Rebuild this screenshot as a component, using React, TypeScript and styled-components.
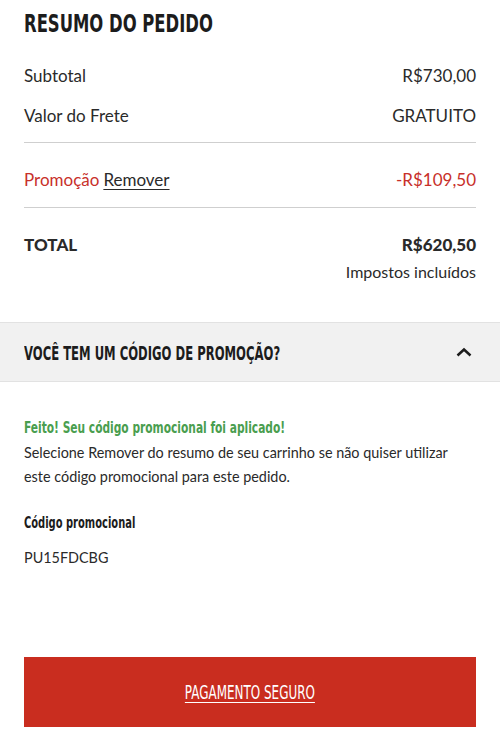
import styled, { createGlobalStyle } from 'styled-components';

const GlobalStyle = createGlobalStyle`
    body {
        margin: 0;
        background: #fff;
        font-family: Lato, "Open Sans", sans-serif;
        color: #222;
    }
`

const Page = styled.div`
    width: 500px;
    height: 734px;
    overflow: hidden;
    background: #fff;
`

const Summary = styled.section`
    padding: 0 24px;
`

// no condensed face is installed, so the narrow headline look is squeezed by hand
const Condensed = styled.span<{ $size: number; $scale: number; $weight?: number; $color?: string }>`
    display: inline-block;
    white-space: nowrap;
    font-family: "DejaVu Sans Condensed", "DejaVu Sans", sans-serif;
    font-weight: ${p => p.$weight ?? 700};
    font-size: ${p => p.$size}px;
    color: ${p => p.$color || '#1c1c1c'};
    transform: scaleX(${p => p.$scale});
    transform-origin: left center;
`

const Title = styled.h1`
    margin: 0;
    padding-top: 3px;
    line-height: 34px;
`

const Row = styled.div<{ $tone?: 'red' | 'bold' }>`
    display: flex;
    justify-content: space-between;
    align-items: center;
    font-size: 17px;
    line-height: 24px;
    color: ${p => p.$tone === 'red' ? '#c8302a' : '#2a2a2a'};
    font-weight: ${p => p.$tone === 'bold' ? 900 : 400};
`

const Group = styled.div<{ $pad: string }>`
    display: flex;
    flex-direction: column;
    gap: 16px;
    padding: ${p => p.$pad};
    border-bottom: 1px solid #cfcfcf;

    &:last-child {
        border-bottom: none;
    }
`

const RemoveLink = styled.a`
    color: #2a2a2a;
    text-decoration: underline;
    text-underline-offset: 3px;
    margin-left: 4px;
`

const TaxNote = styled.div`
    text-align: right;
    font-size: 16px;
    line-height: 24px;
    margin-top: 3px;
    color: #2a2a2a;
`

const PromoBar = styled.div`
    margin-top: 38px;
    height: 58px;
    display: flex;
    align-items: center;
    justify-content: space-between;
    padding: 0 28px 0 24px;
    background: #f1f1f1;
    border-top: 1px solid #e2e2e2;
    border-bottom: 1px solid #e2e2e2;
`

const Heading = styled.h2<{ $gap?: number }>`
    margin: 0 0 ${p => p.$gap ?? 0}px;
    line-height: 22px;
`

const PromoBody = styled.div`
    padding: 31px 24px 0;
`

const Text = styled.p`
    margin: 0;
    font-size: 14.4px;
    line-height: 24px;
    color: #2a2a2a;
`

const CodeBlock = styled.div`
    margin-top: 19px;
    display: flex;
    flex-direction: column;
    gap: 12px;
`

const PayButton = styled.button`
    display: flex;
    align-items: center;
    justify-content: center;
    width: 452px;
    height: 70px;
    margin: 87px 24px 0;
    border: none;
    background: #c92d1f;
    color: #fff;
    cursor: pointer;
`

const ButtonLabel = styled(Condensed)`
    text-decoration: underline;
    text-underline-offset: 3px;
    transform-origin: center;
`

function App(){
    return(
        <Page>
            <GlobalStyle/>
            <Summary>
                <Title><Condensed $size={25} $scale={0.73}>RESUMO DO PEDIDO</Condensed></Title>
                <Group $pad="23px 0 14px">
                    <Row><span>Subtotal</span><span>R$730,00</span></Row>
                    <Row><span>Valor do Frete</span><span>GRATUITO</span></Row>
                </Group>
                <Group $pad="25px 0 15px">
                    <Row $tone="red">
                        <span>Promoção<RemoveLink>Remover</RemoveLink></span>
                        <span>-R$109,50</span>
                    </Row>
                </Group>
                <Group $pad="25px 0 0">
                    <div>
                        <Row $tone="bold"><span>TOTAL</span><span>R$620,50</span></Row>
                        <TaxNote>Impostos incluídos</TaxNote>
                    </div>
                </Group>
            </Summary>
            <PromoBar>
                <Heading><Condensed $size={19} $scale={0.68}>VOCÊ TEM UM CÓDIGO DE PROMOÇÃO?</Condensed></Heading>
                <svg width="16" height="10" viewBox="0 0 16 10">
                    <path d="M1.5 8.5 L8 2.5 L14.5 8.5" fill="none" stroke="#1c1c1c" strokeWidth="2.5"/>
                </svg>
            </PromoBar>
            <PromoBody>
                <Heading $gap={2}>
                    <Condensed $size={16} $scale={0.74} $color="#4a9e4f">Feito! Seu código promocional foi aplicado!</Condensed>
                </Heading>
                <Text>Selecione Remover do resumo de seu carrinho se não quiser utilizar este código promocional para este pedido.</Text>
                <CodeBlock>
                    <Heading><Condensed $size={16} $scale={0.69}>Código promocional</Condensed></Heading>
                    <Text>PU15FDCBG</Text>
                </CodeBlock>
            </PromoBody>
            <PayButton>
                <ButtonLabel $size={19} $scale={0.7} $weight={400} $color="#fff">PAGAMENTO SEGURO</ButtonLabel>
            </PayButton>
        </Page>
    )
}

export default App
